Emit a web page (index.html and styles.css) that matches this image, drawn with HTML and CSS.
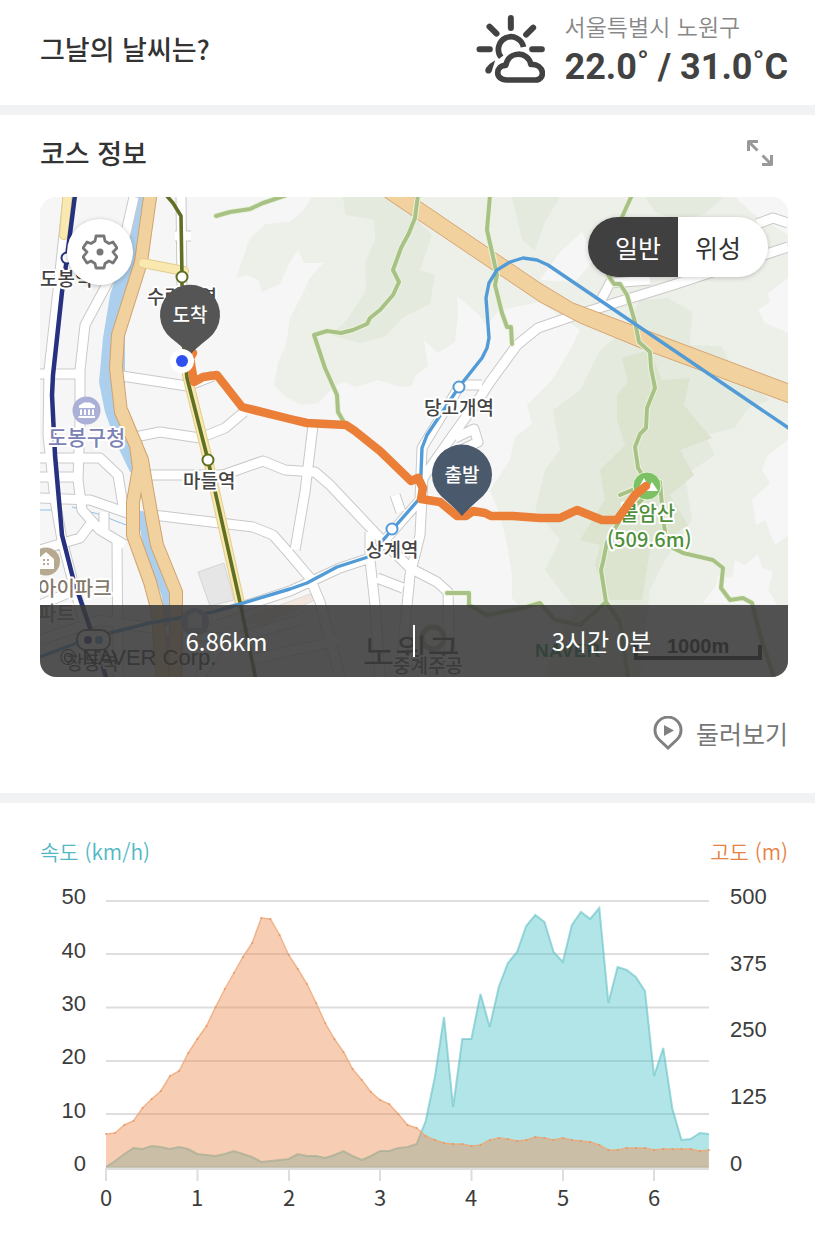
FILE: index.html
```html
<!DOCTYPE html>
<html lang="ko">
<head>
<meta charset="utf-8">
<meta name="viewport" content="width=device-width, initial-scale=1">
<title>코스 정보</title>
<link rel="stylesheet" href="styles.css">
</head>
<body>
<main>
<section class="panel weather">
  <h2 class="title">그날의 날씨는?</h2>
  <div class="forecast">
    <svg class="forecast-icon" viewBox="0 0 206 210" aria-hidden="true">
      <g fill="none" stroke="#424242" stroke-width="18" stroke-linecap="round" stroke-linejoin="round">
        <path d="M104 12V42M40 38L61 59M171 41L150 62M10 106H41M168 106H197"/>
        <path stroke-linecap="butt" stroke-width="17" d="M75 130A38 38 0 1 1 142 99"/>
        <path stroke-width="17" d="M92 198C54 198 58 154 89 154C97 110 156 110 164 151C207 150 208 198 178 198Z"/>
      </g>
      <path d="M57 139Q39 149 30 161C20 177 41 186 47 171Z" fill="#424242"/>
    </svg>
    <div class="forecast-text">
      <p class="place">서울특별시 노원구</p>
      <p class="temps">22.0˚ / 31.0˚C</p>
    </div>
  </div>
</section>

<section class="panel course">
  <header class="course-head">
    <h2 class="title">코스 정보</h2>
    <button class="expand" type="button" aria-label="지도 확대">
      <svg viewBox="0 0 28 28" aria-hidden="true"><path d="M2.500 12V2.500H12M3 3L11.500 11.500M25.500 16V25.500H16M25 25L16.500 16.500" fill="none" stroke="#999" stroke-width="3" stroke-linejoin="round"/></svg>
    </button>
  </header>

  <div class="map">
    <svg class="map-canvas" viewBox="40 197 748 480" preserveAspectRatio="xMidYMid slice" role="img" aria-label="코스 지도">
      <rect x="40" y="197" width="748" height="480" fill="#f6f6f6"/>
      <g class="hills">
        <path fill="#edf0e9" d="M312 197L302 212 290 222 266 224 250 238 244 255 236 278 246 275 258 280 262 292 280 284 290 262 298 250 304 263 323 263 310 278 302 295 290 318 286 345 278 362 274 385 286 397 302 405 318 403 335 386 345 382 355 387 378 380 400 387 412 386 415 376 428 366 424 340 438 353 455 342 458 315 457 296 478 314 486 325 500 310 540 302 580 330 570 350 552 380 527 405 532 424 515 437 510 460 490 490 500 515 506 540 512 575 512 598 522 610 515 677H788V197Z"/>
        <path fill="#e5eadf" d="M343 197L345 215 374 220 375 240 365 262 366 290 347 320 330 335 360 343 385 337 402 318 430 304 435 275 420 270 432 235 418 220 420 197ZM512 197L522 240 535 250 545 222 560 197ZM645 197L655 212 678 220 705 214 720 200 722 197Z"/>
        <path fill="#e5eadf" d="M640 300L668 298 692 312 690 345 722 346 735 372 770 400 748 408 735 428 705 435 715 455 685 475 692 520 665 560 650 590 640 677H545L555 645 575 610 545 570 560 540 535 510 545 470 560 450 553 410 580 390 600 350 625 330Z"/>
        <path fill="#dce4d0" d="M622 358L650 350 662 380 690 378 684 405 700 425 712 438 680 450 694 475 670 495 688 525 650 550 642 600 605 600 595 565 600 545 580 540 605 500 600 470 625 445 617 420 617 395 628 382Z"/>
        <path fill="#f6f6f6" d="M540 280L560 252 582 232 588 245 598 252 590 265 575 282ZM758 310L770 302 768 293 788 278V333L765 323ZM735 197L752 213 788 235V197ZM788 440L768 455 762 470 770 483 752 500 756 525 765 520 775 545 788 535ZM703 603L716 586 718 575 732 578 735 560 745 565 758 554 762 568 773 572 768 590 777 605Z"/>
      </g>
      <path fill="#abcfed" d="M134 197H145L125 330 125 400 145 470 130 472 117 445 105 412 99 382 103 338 110 295 124 250Z"/>
      <path class="line" stroke="#abcfed" stroke-width="8" d="M141 515L148 548 166 596 171 677"/>
      <g class="faint"><path d="M40 510H52M72 507L98 514 126 525"/></g>
      <path d="M198 572L224 563 234 600 210 606Z" fill="#e6e6e6" stroke="#d5d5d5"/>
      <path d="M240 620L310 594 315 600 260 625Z" fill="#f2e6df" stroke="#ddd"/>
      <g class="road-edge">
        <path id="r" d="M68 197L58 290 49 370 48 435 55 500 62 540 75 590 100 677M134 197L122 250 108 282 85 325 80 370 80 420 78 480 82 510 100 530 125 545M40 374H80M40 477L78 477M40 498L90 500 130 514M40 458H100L118 475 124 512M117 540L118 677M92 522L80 538 40 550M122 376L187 386 213 376M130 438L160 432 200 438 225 428 244 412M181 197L182 290M175 236H191M150 475H223L263 461 285 470 315 472 330 485 380 538 410 568 437 582 448 592 450 677M153 515L253 527 273 535 288 552 310 578 320 602 340 677M313 425L305 492 295 550M213 616L290 591 340 568 370 558 392 532 420 500 422 448 459 387M788 247L673 285 573 316 538 328 517 345 490 382 477 402 453 435 423 478 420 535 410 575 400 677M370 532V560L375 605 380 677M377 578L403 588M395 495L401 512M462 385H482M600 302L610 283 650 280M757 224L773 218 788 223M455 438L474 429 478 442 457 452M104 512V530M40 640L100 620 230 640 300 620M200 677L230 630M250 660L340 640M40 605L75 590"/>
      </g>
      <use href="#r" class="road"/>
      <g class="line">
        <path stroke="#d0a36f" stroke-width="14" d="M151 190L141 262 118 335 116 368 121 412 136 445 139 468 133 502V535L150 582 158 612 163 685M122 412L142 460 147 490 152 518 157 545 176 592V622L175 685"/>
        <path stroke="#f1d19d" stroke-width="12" d="M151 190L141 262 118 335 116 368 121 412 136 445 139 468 133 502V535L150 582 158 612 163 685M122 412L142 460 147 490 152 518 157 545 176 592V622L175 685"/>
        <path stroke="#e3cd8c" stroke-width="10" d="M68 190L64 235M143 263L184 271M187 375L208 460 240 603"/>
        <path stroke="#f9e9b1" stroke-width="8" d="M68 190L64 235M143 263L184 271M187 375L208 460 240 603"/>
      </g>
      <path fill="#f1d19d" stroke="#d7a574" d="M383 196L412 196 540 283 573 303 640 328 789 384V403L643 349 580 323 540 302Z"/>
      <g class="line">
        <path class="trail-edge" id="t" d="M216 216L230 212 250 209 263 203 287 195M418 195L415 218 409 233 401 248 393 270 399 282 393 295 380 310 370 318 367 324 353 330 341 333 327 331 314 335 325 368 337 395 338 412 345 424M490 195L487 230 492 252 497 275 495 285 502 313 507 327H511L512 344M632 195L622 217 608 275 614 284H620L627 295 635 322 639 342 650 352 651 368 655 388 647 408 646 428 640 434 635 447 638 468 647 482M620 495L632 490M647 495L620 520 607 542 603 562 601 570 606 602 620 622 628 677M660 482L663 518 667 545 683 553 713 560 723 568 721 588 730 600 743 598 752 603 762 642 774 677M447 593H469V605L487 615 523 608 540 603 555 620 580 625 606 602"/>
        <path class="trail" d="M216 216L230 212 250 209 263 203 287 195M418 195L415 218 409 233 401 248 393 270 399 282 393 295 380 310 370 318 367 324 353 330 341 333 327 331 314 335 325 368 337 395 338 412 345 424M490 195L487 230 492 252 497 275 495 285 502 313 507 327H511L512 344M632 195L622 217 608 275 614 284H620L627 295 635 322 639 342 650 352 651 368 655 388 647 408 646 428 640 434 635 447 638 468 647 482M620 495L632 490M647 495L620 520 607 542 603 562 601 570 606 602 620 622 628 677M660 482L663 518 667 545 683 553 713 560 723 568 721 588 730 600 743 598 752 603 762 642 774 677M447 593H469V605L487 615 523 608 540 603 555 620 580 625 606 602"/>
        <path stroke="#26317f" stroke-width="4.5" d="M75 195L66 265 62 292 53 375 52 395 55 455 62 535 73 578 90 628 107 680"/>
        <path stroke="#5f6f23" stroke-width="3.6" d="M166 195L173 203 181 216 182 277V330L187 378 208 460 240 602 256 680"/>
        <path stroke="#529bd6" stroke-width="3.4" d="M790 429L548 265 537 260 523 258 510 262 497 270 489 283 486 298 489 338 487 348 482 358 459 387 427 435 422 448 420 498 392 530 368 557 337 567 307 583 290 589 213 612 150 623 90 638 40 657"/>
      </g>
      <g fill="#fff" stroke-width="2">
        <circle cx="67" cy="258" r="5.500" stroke="#26317f"/>
        <circle cx="182" cy="277" r="5.500" stroke="#5f6f23"/>
        <circle cx="208" cy="460" r="5.500" stroke="#5f6f23"/>
        <circle cx="459" cy="387" r="5.500" stroke="#529bd6"/>
        <circle cx="392" cy="529" r="5.500" stroke="#529bd6"/>
        <rect x="77" y="630" width="33" height="20" rx="9" stroke="#555"/>
      </g>
      <g><circle cx="88" cy="640" r="4" fill="#26317f"/><circle cx="99" cy="640" r="4" fill="#529bd6"/>
        <circle cx="195" cy="622" r="14" fill="#aab0d6"/><path d="M188 628V616L195 612 202 616V628Z" fill="#eee"/>
        <circle cx="433" cy="638" r="11" fill="none" stroke="#b7a98f" stroke-width="5"/></g>
      <circle cx="86.500" cy="410.500" r="14" fill="#aab0d6"/>
      <path fill="#fff" d="M79 408V405.500L84 402.500H90L95 405.500V408ZM80 409.500H82V415H80ZM84 409.500H86V415H84ZM88 409.500H90V415H88ZM92 409.500H94V415H92ZM78.500 416H95V418H78.500Z"/>
      <circle cx="46" cy="561.500" r="14" fill="#b7a98f"/>
      <path fill="#fff" d="M38 569V559L46 552 54 559V569Z"/><path fill="#b7a98f" d="M43 559h2v2h-2zM47 559h2v2h-2zM43 563h2v2h-2zM47 563h2v2h-2z"/>
      <circle cx="647" cy="486" r="14" fill="#7cc265" stroke="#e9f2df"/>
      <path fill="#fff" d="M637 491L644 478 649 487 652 482 658 491Z"/>
      <g class="label">
        <text x="40" y="286">도봉역</text>
        <text x="147" y="304">수락산역</text>
        <text x="424" y="415">당고개역</text>
        <text x="183" y="488">마들역</text>
        <text x="366" y="557">상계역</text>
        <text x="66" y="670">창동역</text>
        <g class="civic"><text x="48" y="445">도봉구청</text></g>
        <g class="home"><text x="38" y="596">아이파크</text><text x="38" y="621">파트</text></g>
        <g class="peak"><text x="620" y="521">불암산</text><text x="607" y="547">(509.6m)</text></g>
      </g>
      <text class="district" x="363" y="665">노원구</text>
      <g class="label"><text x="393" y="673">중계주공</text></g>
      <text class="copyright" x="60" y="665">© NAVER Corp.</text>
      <text class="brand" x="535" y="657">NAVER</text>
      <text class="scale" x="667" y="653">1000m</text>
      <path d="M636 645V658H760V645" fill="none" stroke="#000" stroke-width="4"/>
      <path class="line" stroke="#ec7f37" stroke-width="8.500" d="M193 353L190 358 194 382 203 377 217 375 242 407 290 419 307 423 346 425 355 431 380 451 411 481 418 478 423 488 421 499 440 502 457 516 466 516 473 511 485 513 491 516 513 516 540 518 560 518 577 510 602 520 617 520 635 495 646 486"/>
      <path fill="#555" d="M190 355Q185 349 171 338A30 30 0 1 1 209 338Q195 349 190 355Z"/>
      <path fill="#4a596b" d="M462 516Q457 510 441 496A30 30 0 1 1 483 496Q467 510 462 516Z"/>
      <text class="pin-text" x="190" y="322">도착</text>
      <text class="pin-text" x="462" y="482">출발</text>
      <circle cx="182" cy="361" r="12" fill="#fff"/><circle cx="182" cy="361" r="6" fill="#2f4ff0"/>
    </svg>
    <button class="settings" type="button" aria-label="지도 설정">
      <svg viewBox="0 0 36 36" aria-hidden="true"><path d="M14 2H22L23 7 27 9.500 31 8 35 14 31 18 35 23 31 29 27 27 23 29.500 22 34H14L13 29.500 9 27 5 29 1 23 5 18 1 14 5 8 9 9.500 13 7Z" fill="none" stroke="#777" stroke-width="2.800" stroke-linejoin="round"/><circle cx="18" cy="18" r="3.500" fill="#777"/></svg>
    </button>
    <div class="switch">
      <button class="switch-item is-on" type="button" aria-pressed="true">일반</button>
      <button class="switch-item" type="button" aria-pressed="false">위성</button>
    </div>
    <div class="summary"><span class="summary-item">6.86km</span><span class="summary-item">3시간 0분</span></div>
  </div>

  <div class="tour-row">
    <button class="tour" type="button">
      <svg viewBox="0 0 30 35" aria-hidden="true"><path d="M15 32L6 23.500A13 13 0 1 1 24 23.500Z" fill="none" stroke="#808080" stroke-width="3"/><path d="M11 9L21 14.500 11 20Z" fill="#808080"/></svg>
      둘러보기
    </button>
  </div>
</section>

<section class="stats">
  <div class="legend"><span class="speed-name">속도 (km/h)</span><span class="height-name">고도 (m)</span></div>
  <svg class="chart" viewBox="40 871 748 360" role="img" aria-label="속도와 고도 그래프">
    <path class="grid" d="M106 901H709M106 954H709M106 1007.500H709M106 1061H709M106 1114H709M106 1167.500H709"/>
    <path class="ticks" d="M105 1169H709M106 1169V1181M197.500 1169V1181M289 1169V1181M380 1169V1181M471.500 1169V1181M563 1169V1181M654 1169V1181"/>
    <path id="speed-area" class="speed-area"/><path id="speed-line" class="speed-line"/>
    <path id="height-area" class="height-area"/><path id="height-line" class="height-line"/>
    <path id="height-dots" class="height-dots"/>
    <g class="left-axis"><text x="86" y="904">50</text><text x="86" y="958">40</text><text x="86" y="1011">30</text><text x="86" y="1064">20</text><text x="86" y="1118">10</text><text x="86" y="1171">0</text></g>
    <g class="right-axis"><text x="730" y="904">500</text><text x="730" y="971">375</text><text x="730" y="1037">250</text><text x="730" y="1104">125</text><text x="730" y="1171">0</text></g>
    <g class="bottom-axis"><text x="106" y="1206">0</text><text x="197" y="1206">1</text><text x="289" y="1206">2</text><text x="380" y="1206">3</text><text x="471" y="1206">4</text><text x="563" y="1206">5</text><text x="654" y="1206">6</text></g>
  </svg>
</section>
</main>
<script src="chart.js"></script>
</body>
</html>
```

FILE: styles.css
```css
* { box-sizing: border-box; }
body {
  margin: 0;
  background: #fff;
  color: #333;
  font-family: "Noto Sans CJK KR", "Noto Sans", sans-serif;
}
h2, p { margin: 0; }
button {
  padding: 0;
  border: 0;
  background: none;
  color: inherit;
  font: inherit;
  cursor: pointer;
}
.panel {
  padding: 0 27px 0 40px;
  border-bottom: 10px solid #f1f2f4;
}
.title { font-size: 27px; font-weight: 500; line-height: 40px; }

.weather {
  display: flex;
  align-items: center;
  justify-content: space-between;
  padding-top: 8px;
  padding-bottom: 15px;
}
.forecast { display: flex; align-items: center; gap: 20px; }
.forecast-icon { width: 69px; height: 70px; }
.place { color: #888; font-size: 23px; font-weight: 350; line-height: 36px; }
.temps {
  color: #424242;
  font-family: Roboto, sans-serif;
  font-size: 36px;
  font-weight: 700;
  line-height: 46px;
}

.course-head {
  display: flex;
  align-items: center;
  justify-content: space-between;
  padding: 18px 14px 24px 0;
}
.expand { width: 28px; height: 28px; }
.expand svg, .settings svg { display: block; width: 100%; }

.map {
  position: relative;
  overflow: hidden;
  aspect-ratio: 748 / 480;
  border-radius: 16px;
}
.map-canvas { display: block; width: 100%; height: 100%; }
.line { fill: none; stroke-linejoin: round; stroke-linecap: round; }
.line path { fill: none; }
.faint { fill: none; stroke: #8fc0e8; stroke-width: 1; }
.road-edge path { fill: none; stroke-linejoin: round; }
.road-edge { stroke: #c9c9c9; stroke-width: 11; }
.road { fill: none; stroke: #fff; stroke-width: 9; stroke-linejoin: round; }
#r { fill: none; }
.trail-edge { stroke: #eaf2dd; stroke-width: 6; }
.trail { stroke: #a8c286; stroke-width: 4; }
.label {
  fill: #444;
  stroke: #fff;
  stroke-width: 4;
  stroke-linejoin: round;
  paint-order: stroke;
  font-size: 19px;
  font-weight: 500;
}
.civic { fill: #7b82b5; font-size: 21px; }
.home { fill: #85796c; font-size: 20px; }
.peak { fill: #4f8f3a; font-size: 20px; }
.district { fill: #333; font-size: 35px; }
.copyright { fill: #222; font: 22px "Liberation Sans", sans-serif; }
.brand { fill: #00843c; font: 700 19px "Liberation Sans", sans-serif; }
.scale { fill: #000; font: 700 20px "Liberation Sans", sans-serif; }
.pin-text { fill: #fff; font-size: 19px; font-weight: 500; text-anchor: middle; }

.settings {
  position: absolute;
  top: 22px;
  left: 27px;
  width: 66px;
  height: 66px;
  padding: 15px;
  border-radius: 50%;
  background: #fff;
  box-shadow: 0 1px 5px rgba(0, 0, 0, .25);
}
.switch {
  position: absolute;
  top: 20px;
  right: 20px;
  display: flex;
  overflow: hidden;
  border-radius: 30px;
  background: #fff;
  box-shadow: 0 1px 5px rgba(0, 0, 0, .2);
}
.switch-item { width: 90px; height: 60px; padding-right: 10px; font-size: 25px; }
.switch-item.is-on { padding: 0 0 0 10px; background: #404040; color: #fff; }
.summary {
  position: absolute;
  right: 0;
  bottom: 0;
  left: 0;
  display: flex;
  align-items: center;
  height: 72px;
  background: rgba(58, 58, 58, .88);
  color: #fff;
  font-size: 24px;
  line-height: 32px;
}
.summary-item { flex: 1; text-align: center; }
.summary-item + .summary-item { border-left: 2px solid #fff; }

.tour-row { display: flex; justify-content: flex-end; padding: 36px 0 40px; }
.tour {
  display: flex;
  align-items: center;
  gap: 13px;
  color: #777;
  font-size: 25px;
  line-height: 40px;
}
.tour svg { width: 30px; height: 35px; }

.stats { padding: 28px 27px 25px 40px; }
.legend {
  display: flex;
  justify-content: space-between;
  font-size: 21px;
  font-weight: 350;
  line-height: 40px;
}
.speed-name { color: #4fb8c4; }
.height-name { color: #e58345; }
.chart { display: block; width: 100%; fill: #3c3c3c; font-size: 22px; }
.grid, .ticks { fill: none; stroke: #dedede; stroke-width: 2; }
.height-area { fill: #ec8a4a; fill-opacity: .42; }
.speed-area { fill: #4fc3ca; fill-opacity: .44; }
.height-line { fill: none; stroke: #eda777; stroke-opacity: .8; stroke-width: 1.5; }
.speed-line { fill: none; stroke: #62bfc5; stroke-opacity: .6; stroke-width: 2; }
.height-dots { fill: none; stroke: #e58d57; stroke-opacity: .7; stroke-width: 2; stroke-linecap: round; }
.left-axis, .right-axis { font-family: "Liberation Sans", sans-serif; }
.left-axis { text-anchor: end; }
.bottom-axis { text-anchor: middle; font-size: 22px; }
```

FILE: chart.js
```js
// One sample per 0.1 km, as vertical positions in the chart's viewBox.
const heights = [1134,1133,1125,1121,1108,1099,1091,1076,1071,1053,1039,1026,1007,989,973,957,943,918,919,935,955,969,984,1003,1023,1039,1052,1069,1080,1092,1100,1104,1114,1125,1128,1136,1140,1143,1144,1144,1146,1145,1140,1138,1139,1141,1140,1137,1138,1140,1138,1140,1141,1142,1145,1150,1150,1148,1148,1148,1150,1149,1149,1149,1149,1151,1150];
const speeds = [1167,1161,1154,1148,1149,1146,1147,1149,1147,1149,1154,1155,1156,1154,1151,1154,1157,1162,1161,1160,1159,1154,1156,1156,1158,1155,1151,1156,1160,1156,1151,1151,1148,1147,1144,1121,1077,1017,1107,1039,1039,994,1027,987,963,952,926,915,922,952,962,925,912,919,908,1003,967,970,977,991,1076,1048,1109,1140,1139,1133,1134];
const baseline = 1167.5;
const points = values => values.map((y, i) => [(106 + i * 9.135).toFixed(1), y]);

function plot(name, values) {
  const line = "M" + points(values).map(p => p.join(" ")).join("L");
  document.getElementById(name + "-line").setAttribute("d", line);
  document.getElementById(name + "-area").setAttribute("d", line + `V${baseline}H106Z`);
}

plot("height", heights);
plot("speed", speeds);
document.getElementById("height-dots").setAttribute("d", points(heights).map(([x, y]) => `M${x} ${y}h.1`).join(""));
```
